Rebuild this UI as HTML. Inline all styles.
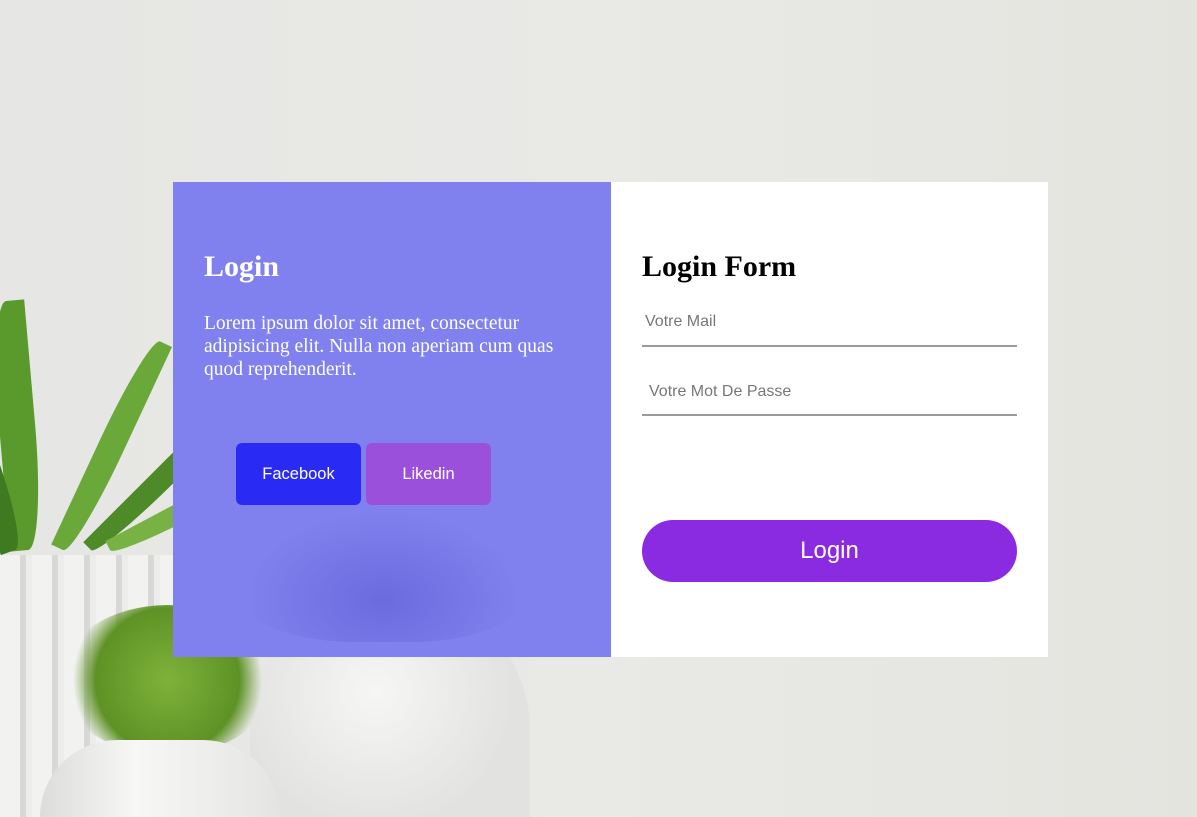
<!DOCTYPE html>
<html><head><meta charset="utf-8"><style>
*{margin:0;padding:0;box-sizing:border-box}
html,body{width:1197px;height:817px;overflow:hidden}
body{font-family:"Liberation Serif",serif}
.wrap{position:relative;width:1197px;height:817px;overflow:hidden;background:linear-gradient(90deg,#e6e6e4 0%,#e9e9e6 50%,#e4e4df 100%)}
.pot1{position:absolute;left:0;top:555px;width:175px;height:262px;background:repeating-linear-gradient(90deg,#f2f2f0 0 20px,#d8d8d6 20px 26px,#ececea 26px 32px)}
.pot2{position:absolute;left:250px;top:590px;width:280px;height:227px;border-radius:140px 140px 0 0;background:radial-gradient(circle at 45% 45%,#f6f6f5,#e2e2e0 70%)}
.pot3{position:absolute;left:40px;top:740px;width:240px;height:77px;border-radius:120px 120px 0 0;background:linear-gradient(90deg,#dcdcda,#f7f7f6 40%,#e4e4e2)}
.leaf{position:absolute;border-radius:50% 0;transform-origin:bottom center}
.bush{position:absolute;left:60px;top:605px;width:215px;height:150px;border-radius:50%;background:radial-gradient(circle,#7fb23a,#5e9225 55%,rgba(94,143,37,0) 72%)}
.left{position:absolute;left:173px;top:182px;width:438px;height:475px;background:#8080ee;overflow:hidden}
.shadow{position:absolute;left:60px;top:320px;width:300px;height:140px;border-radius:50% 50% 40% 40%;background:radial-gradient(ellipse at 50% 70%,rgba(90,90,210,0.55),rgba(110,110,230,0) 65%)}
.right{position:absolute;left:611px;top:182px;width:437px;height:475px;background:#fff}
h2{font-size:30px;font-weight:bold;position:absolute}
.left h2{left:31px;top:68px;color:#fff}
.left p{position:absolute;left:31px;top:130px;width:372px;color:#fff;font-size:19.5px;line-height:23px}
.btn{position:absolute;top:261px;width:125px;height:62px;border-radius:6px;color:#fff;font:16.5px "Liberation Sans",sans-serif;display:flex;align-items:center;justify-content:center}
.fb{left:63px;background:#2a2af5}
.li{left:193px;background:#9b50dc}
.right h2{left:31px;top:68px;color:#000}
.inp{position:absolute;left:31px;width:375px;border-bottom:2px solid #9a9a9a;color:#777;font:16px "Liberation Sans",sans-serif}
.login{position:absolute;left:31px;top:338px;width:375px;height:62px;border-radius:31px;background:#8a2be2;color:#fff;font:24px "Liberation Sans",sans-serif;display:flex;align-items:center;justify-content:center}
</style></head><body><div class="wrap">
<div class="leaf" style="left:10px;top:300px;width:36px;height:250px;background:#5a9a2c;transform:rotate(-5deg)"></div>
<div class="leaf" style="left:50px;top:320px;width:26px;height:230px;background:#6aa83a;transform:rotate(25deg)"></div>
<div class="leaf" style="left:80px;top:330px;width:22px;height:220px;background:#4f8a28;transform:rotate(45deg)"></div>
<div class="leaf" style="left:100px;top:360px;width:20px;height:190px;background:#78b244;transform:rotate(62deg)"></div>
<div class="leaf" style="left:0px;top:360px;width:30px;height:190px;background:#3f7a20;transform:rotate(-20deg)"></div>
<div class="pot1"></div>
<div class="pot2"></div>
<div class="bush"></div>
<div class="pot3"></div>
<div class="left">
<div class="shadow"></div>
<h2>Login</h2>
<p>Lorem ipsum dolor sit amet, consectetur adipisicing elit. Nulla non aperiam cum quas quod reprehenderit.</p>
<div class="btn fb">Facebook</div>
<div class="btn li">Likedin</div>
</div>
<div class="right">
<h2>Login Form</h2>
<div class="inp" style="top:131px;height:34px;padding-left:3px">Votre Mail</div>
<div class="inp" style="top:201px;height:33px;padding-left:7px">Votre Mot De Passe</div>
<div class="login">Login</div>
</div>
</div></body></html>
